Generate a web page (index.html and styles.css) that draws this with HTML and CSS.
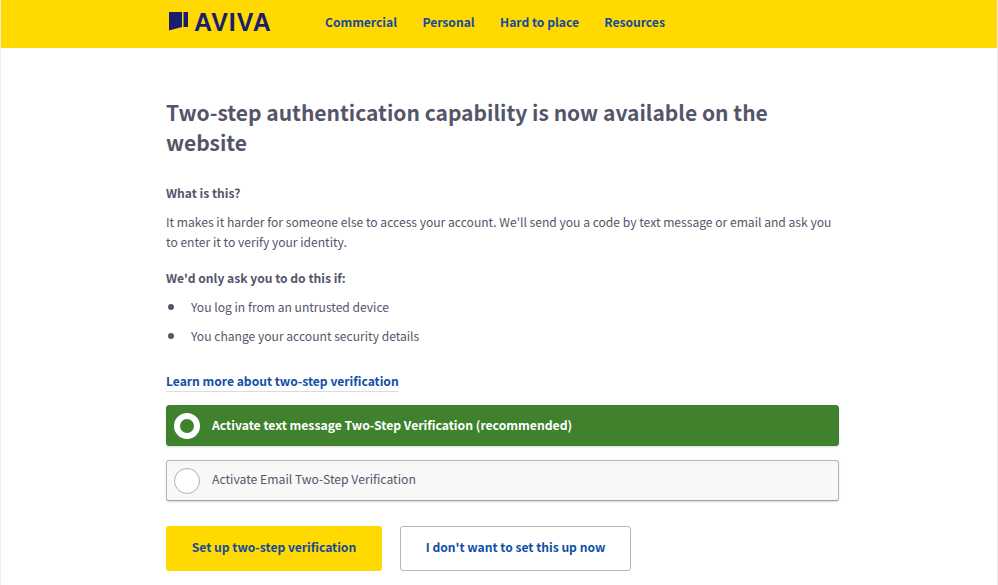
FILE: index.html
```html
<!DOCTYPE html>
<html lang="en">
<head>
    <meta charset="UTF-8">
    <meta name="viewport" content="width=device-width, initial-scale=1.0">
    <title>Two-step authentication</title>
    <link rel="stylesheet" href="styles.css">
</head>
<body>
    <header class="site-header">
        <div class="logo">
            <svg class="logo-mark" width="19" height="19" viewBox="0 0 19 19">
                <path d="M0 0H13V15L0 18.500Z" fill="#1b1f6b"/>
                <path d="M14.500 0H19V15H14.500Z" fill="#1b1f6b"/>
            </svg>
            <span class="logo-text">AVIVA</span>
        </div>
        <nav class="main-nav">
            <a href="#">Commercial</a>
            <a href="#">Personal</a>
            <a href="#">Hard to place</a>
            <a href="#">Resources</a>
        </nav>
    </header>

    <main class="content">
        <h1 class="title">Two-step authentication capability is now available on the website</h1>

        <h2 class="subtitle">What is this?</h2>
        <p class="intro">It makes it harder for someone else to access your account. We'll send you a code by text message or email and ask you to enter it to verify your identity.</p>

        <h2 class="subtitle subtitle-if">We'd only ask you to do this if:</h2>
        <ul class="reasons">
            <li>You log in from an untrusted device</li>
            <li>You change your account security details</li>
        </ul>

        <a class="learn-more" href="#">Learn more about two-step verification</a>

        <div class="options">
            <label class="option selected">
                <span class="radio"></span>
                Activate text message Two-Step Verification (recommended)
            </label>
            <label class="option">
                <span class="radio"></span>
                Activate Email Two-Step Verification
            </label>
        </div>

        <div class="button-group">
            <button class="btn btn-primary">Set up two-step verification</button>
            <button class="btn btn-secondary">I don't want to set this up now</button>
        </div>
    </main>
</body>
</html>
```

FILE: styles.css
```css
* {
    box-sizing: border-box;
    margin: 0;
    padding: 0;
}

body {
    font-family: "Noto Sans CJK SC", "Open Sans", sans-serif;
    font-size: 12.1px;
    line-height: 20px;
    color: #55556a;
    background: #fff;
    border-left: 1px solid #eee;
    border-right: 1px solid #eee;
    height: 585px;
    overflow: hidden;
}

.site-header {
    display: flex;
    align-items: center;
    height: 48px;
    margin-left: -1px;
    margin-right: -1px;
    padding-left: 169px;
    padding-bottom: 5px;
    background: #ffd900;
}

.logo {
    display: flex;
    align-items: center;
    gap: 6px;
    width: 156px;
}

.logo-text {
    font-family: "Liberation Sans", sans-serif;
    font-size: 25px;
    line-height: 24px;
    font-weight: bold;
    letter-spacing: 1px;
    color: #1b1f6b;
}

.main-nav {
    display: flex;
    gap: 25.400px;
}

.main-nav a {
    font-size: 12.1px;
    font-weight: bold;
    color: #134a9e;
    text-decoration: none;
}

.content {
    width: 673px;
    margin-left: 165px;
    padding-top: 49px;
}

.title {
    font-size: 21px;
    line-height: 30px;
    font-weight: bold;
    margin-bottom: 26px;
}

.subtitle {
    font-size: 12.1px;
    line-height: 20px;
    font-weight: bold;
    margin-bottom: 9px;
}

.subtitle-if {
    margin-top: 16px;
    margin-bottom: 9px;
}

.reasons {
    list-style: none;
}

.reasons li {
    position: relative;
    padding-left: 25px;
    margin-bottom: 9px;
}

.reasons li::before {
    content: "";
    position: absolute;
    left: 2px;
    top: 7px;
    width: 6px;
    height: 6px;
    border-radius: 50%;
    background: #55556a;
}

.learn-more {
    display: inline-block;
    margin-top: 16px;
    font-weight: bold;
    line-height: 20px;
    color: #0f4fa8;
    text-decoration: none;
    border-bottom: 1px solid #d5dcea;
}

.options {
    display: flex;
    flex-direction: column;
    gap: 14px;
    margin-top: 13px;
}

.option {
    display: flex;
    align-items: center;
    gap: 12px;
    height: 41px;
    padding-left: 7px;
    padding-bottom: 4px;
    font-size: 12.2px;
    border-radius: 3px;
    border: 1px solid #b5b5b5;
    border-bottom-color: #a0a0a0;
    background: #f8f8f8;
    box-shadow: 0 1px 2px rgba(0,0,0,0.15);
}

.option.selected {
    padding-bottom: 2px;
    border-color: #40812e;
    background: #40812e;
    color: #fff;
    font-weight: bold;
}

.radio {
    width: 26px;
    height: 26px;
    margin-top: 4px;
    border: 1px solid #b0b0b0;
    border-radius: 50%;
    background: #fff;
}

.option.selected .radio {
    margin-top: 2px;
    border: 6px solid #fff;
    background: #40812e;
}

.button-group {
    display: flex;
    gap: 18px;
    margin-top: 25px;
}

.btn {
    height: 45px;
    padding-bottom: 5px;
    font-family: inherit;
    font-size: 12.1px;
    font-weight: bold;
    border-radius: 3px;
    cursor: pointer;
}

.btn-primary {
    width: 216px;
    border: none;
    background: #ffd900;
    color: #134a9e;
}

.btn-secondary {
    width: 231px;
    border: 1px solid #b5b5b5;
    background: #fff;
    color: #0f4fa8;
}
```
